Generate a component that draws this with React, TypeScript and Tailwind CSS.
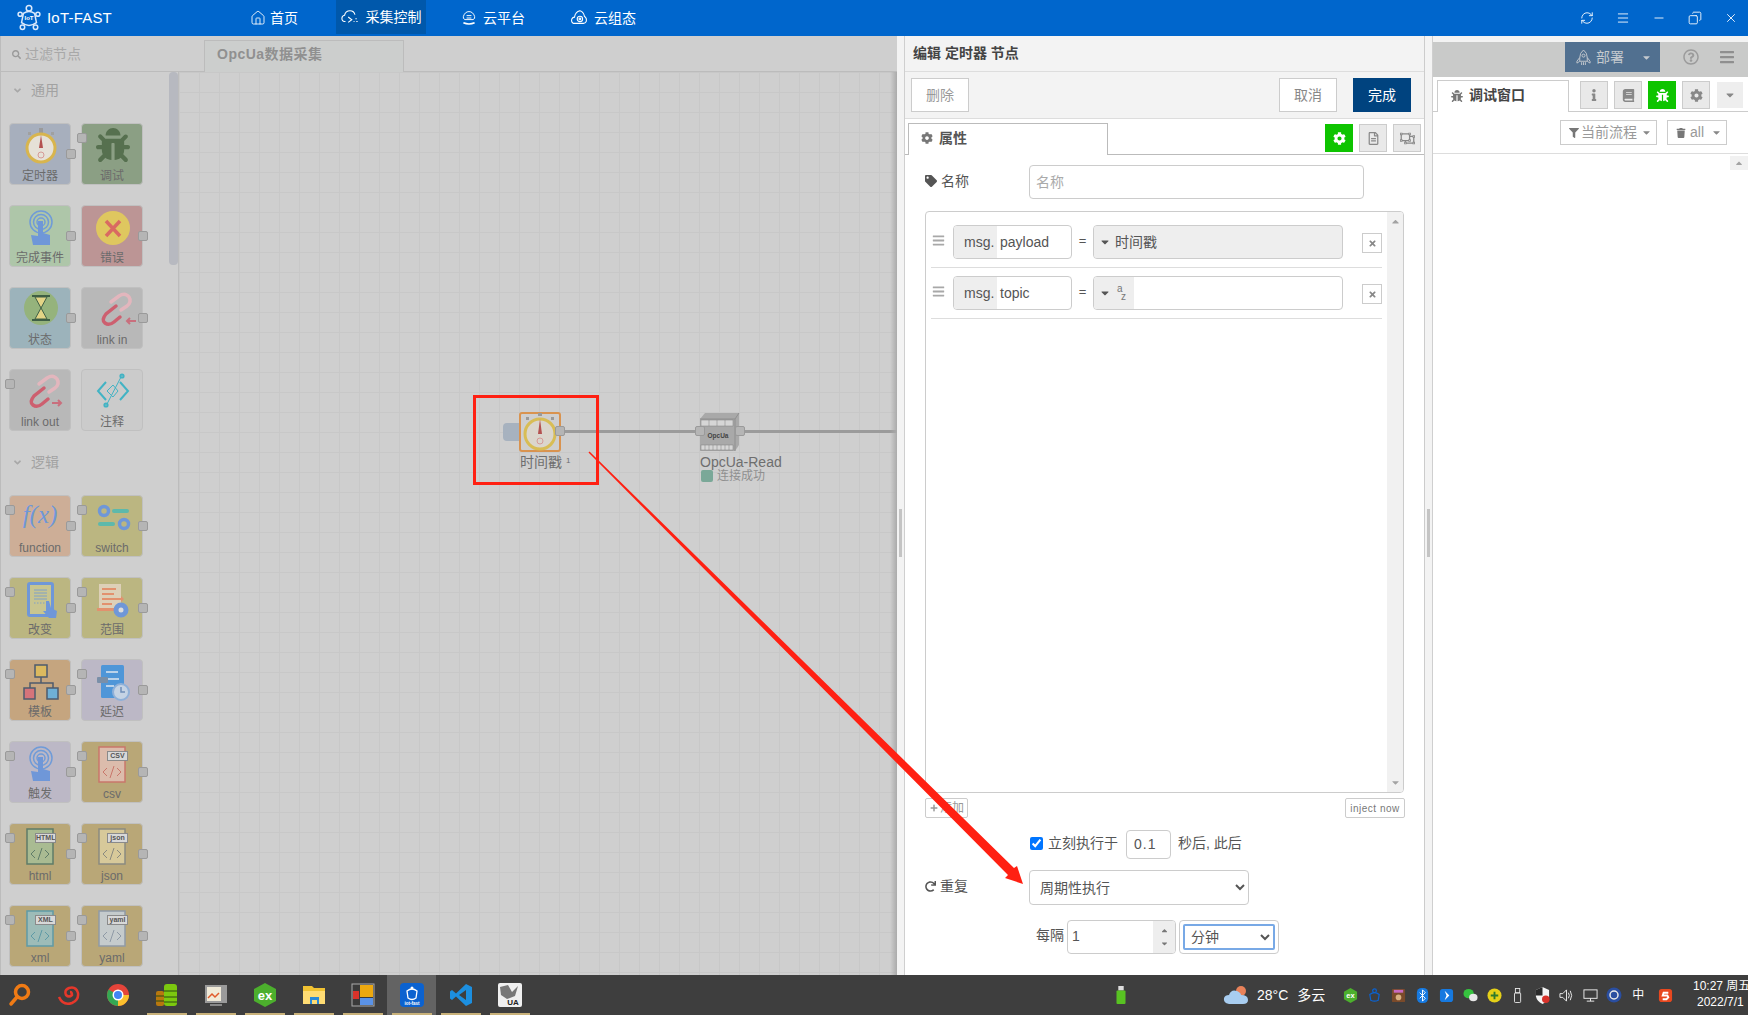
import React from "react";
import {
  FaAngleDown,
  FaBars,
  FaBook,
  FaBug,
  FaCaretDown,
  FaCaretUp,
  FaCog,
  FaFilter,
  FaInfo,
  FaPlus,
  FaRedo,
  FaRegFileAlt,
  FaRegObjectUngroup,
  FaRegQuestionCircle,
  FaSearch,
  FaTag,
  FaTimes,
  FaTrash,
} from "react-icons/fa";
import { Copy, House, Menu, Minus, RefreshCw, X } from "lucide-react";

// ---- palette icons -------------------------------------------------------

const IconBox = ({ children }: { children: React.ReactNode }) => (
  <svg viewBox="0 0 62 44" className="absolute left-0 top-0 w-[62px] h-[44px]">
    {children}
  </svg>
);

const TimerIcon = () => (
  <IconBox>
    <rect x="29" y="4" width="4" height="5" fill="#9a9a9a" />
    <rect x="18" y="8" width="3" height="3" fill="#a0a0a0" />
    <rect x="41" y="8" width="3" height="3" fill="#a0a0a0" />
    <circle cx="31" cy="24" r="14" fill="#e6e1d7" stroke="#d8b54e" strokeWidth="3" />
    <path d="M31 11 L33 24 L29 24 Z" fill="#b4524f" />
    <circle cx="31" cy="31" r="3" fill="none" stroke="#d69a96" strokeWidth="1" />
  </IconBox>
);

const TouchIcon = () => (
  <IconBox>
    <g fill="none" stroke="#6f9bd8" strokeWidth="1.5">
      <circle cx="31" cy="16" r="11" />
      <circle cx="31" cy="16" r="7.5" />
      <circle cx="31" cy="16" r="4" />
    </g>
    <path d="M28 15 h5 v12 l7 2 v10 h-17 l-2 -10 l7 1 Z" fill="#6f97d8" />
  </IconBox>
);

const ErrorIcon = () => (
  <IconBox>
    <circle cx="31" cy="22" r="17" fill="#dfc75f" />
    <path d="M24 15 L38 30 M38 15 L24 30" stroke="#d96a62" strokeWidth="3.5" />
  </IconBox>
);

const StatusIcon = () => (
  <IconBox>
    <circle cx="31" cy="20" r="17" fill="#95b37c" />
    <path d="M22 8 h18 M22 32 h18" stroke="#3f5f45" strokeWidth="2" />
    <path d="M25 9 h12 l-6 11 l6 11 h-12 l6 -11 Z" fill="#e3d486" stroke="#3f5f45" strokeWidth="1" />
  </IconBox>
);

const LinkIcon = ({ dir }: { dir: "in" | "out" }) => (
  <IconBox>
    <path d="M29 14 L37 8 Q43 4 47 9 Q50 14 45 18 L39 22" fill="none" stroke="#e3b6bd" strokeWidth="3.5" strokeLinecap="round" />
    <path d="M34 18 L24 26 Q19 32 23 35 Q27 38 32 34 L38 29" fill="none" stroke="#cd5f6f" strokeWidth="3.5" strokeLinecap="round" />
    {dir === "in" ? (
      <path d="M54 33 h-9 m3 -3 l-3 3 l3 3" fill="none" stroke="#c96f7d" strokeWidth="2" />
    ) : (
      <path d="M42 33 h9 m-3 -3 l3 3 l-3 3" fill="none" stroke="#c96f7d" strokeWidth="2" />
    )}
  </IconBox>
);

const CommentIcon = () => (
  <IconBox>
    <g fill="none" stroke="#42b3c4" strokeWidth="2">
      <path d="M24 12 L16 21 L24 30 M38 12 L46 21 L38 30" />
      <path d="M25 21 L31 15 L36 21 L31 27 Z" strokeWidth="1" />
      <path d="M25 34 L39 7" strokeWidth="1" />
      <circle cx="40" cy="6" r="1.6" />
      <circle cx="24" cy="35" r="1.6" />
    </g>
  </IconBox>
);

const SwitchIcon = () => (
  <IconBox>
    <g fill="none" stroke="#6f97d8" strokeWidth="3.5">
      <circle cx="22" cy="15" r="4.5" />
      <circle cx="42" cy="28" r="4.5" />
    </g>
    <rect x="30" y="13" width="17" height="4" rx="2" fill="#5db9ab" />
    <rect x="16" y="26" width="17" height="4" rx="2" fill="#5db9ab" />
  </IconBox>
);

const ChangeIcon = () => (
  <IconBox>
    <rect x="18.5" y="5.5" width="24" height="32" rx="1.5" fill="#c8c590" stroke="#6f97d8" strokeWidth="3" />
    <path d="M24 12 h13 M24 15 h13 M24 18 h13 M24 21 h13" stroke="#7fa0c8" strokeWidth="1" />
    <path d="M24 25 h11" stroke="#7fa0c8" strokeWidth="1" strokeDasharray="1.5 1.5" />
    <path d="M36 23 l3 0 l2 7 l6 3 l-1 7 h-7 l-6 -7 l3 0 Z" fill="#6f97d8" />
  </IconBox>
);

const RangeIcon = () => (
  <IconBox>
    <rect x="17" y="6" width="22" height="26" fill="#ddd0b8" />
    <path d="M20 11 h14 M20 16 h12 M20 21 h14 M20 26 h10" stroke="#e2916e" strokeWidth="2" />
    <path d="M31 20 h8 l0 -2 l3 3 l-3 3 l0 -2 h-8 Z" fill="#e2916e" />
    <rect x="15" y="30" width="18" height="3" fill="#e2916e" />
    <circle cx="39" cy="32" r="5" fill="#ddd" stroke="#6f97d8" strokeWidth="5" />
  </IconBox>
);

const TemplateIcon = () => (
  <IconBox>
    <rect x="25" y="5" width="12" height="12" fill="#dbb95f" stroke="#4e5b6e" strokeWidth="1.5" />
    <path d="M31 17 v6 M20 28 v-5 h23 v5" fill="none" stroke="#4e5b6e" strokeWidth="1.5" />
    <rect x="14" y="28" width="11" height="11" fill="#d5747a" stroke="#4e5b6e" strokeWidth="1.5" />
    <rect x="37" y="28" width="11" height="11" fill="#6fb0d6" stroke="#4e5b6e" strokeWidth="1.5" />
  </IconBox>
);

const DelayIcon = () => (
  <IconBox>
    <rect x="19" y="5" width="23" height="33" rx="1.5" fill="#4f96d8" />
    <path d="M24 12 h12 M24 19 h13 M24 26 h8" stroke="#dfe6ee" strokeWidth="1.5" />
    <rect x="15" y="17" width="11" height="6" rx="1" fill="#7a8fa8" />
    <circle cx="39" cy="32" r="8" fill="#c5d3e4" stroke="#8fb0d8" strokeWidth="2" />
    <path d="M39 27 v5 h4" fill="none" stroke="#6f8fb8" strokeWidth="1.5" />
  </IconBox>
);

const FileIcon = ({ tag, stroke, fill }: { tag: string; stroke: string; fill: string }) => (
  <>
    <svg viewBox="0 0 62 44" className="absolute left-0 top-0 w-[62px] h-[44px]">
      <rect x="17" y="5" width="26" height="35" fill={fill} stroke={stroke} strokeWidth="1.5" />
      <path d="M25 26 l-4 4 l4 4 M35 26 l4 4 l-4 4 M32 24 l-4 12" fill="none" stroke={stroke} strokeWidth="1" />
    </svg>
    <span className="absolute left-[25px] top-[9px] h-[10px] w-[21px] bg-[#d8d8d8] border border-[#8a8a8a] text-[7px] leading-[8px] font-bold text-center text-[#555] overflow-hidden">
      {tag}
    </span>
  </>
);

// ---- palette ------------------------------------------------------------

type PaletteNode = {
  label: string;
  bg: string;
  icon: React.ReactNode;
  left?: boolean;
  right?: boolean;
};

const generalNodes: PaletteNode[] = [
  { label: "定时器", bg: "bg-[#a7afbd]", icon: <TimerIcon />, right: true },
  {
    label: "调试",
    bg: "bg-[#8b9f84]",
    icon: <FaBug className="absolute left-[14px] top-[4px] text-[#56704f]" size={34} />,
    left: true,
  },
  { label: "完成事件", bg: "bg-[#aec6a9]", icon: <TouchIcon />, right: true },
  { label: "错误", bg: "bg-[#bc9595]", icon: <ErrorIcon />, right: true },
  { label: "状态", bg: "bg-[#9cb3bb]", icon: <StatusIcon />, right: true },
  { label: "link in", bg: "bg-[#b8b8b8]", icon: <LinkIcon dir="in" />, right: true },
  { label: "link out", bg: "bg-[#b8b8b8]", icon: <LinkIcon dir="out" />, left: true },
  { label: "注释", bg: "bg-[#cbcbcb]", icon: <CommentIcon /> },
];

const logicNodes: PaletteNode[] = [
  {
    label: "function",
    bg: "bg-[#cdae97]",
    icon: (
      <span className="absolute inset-x-0 top-[3px] text-center font-['Liberation_Serif',serif] italic text-[25px] leading-[32px] text-[#6f97d8]">
        f(x)
      </span>
    ),
    left: true,
    right: true,
  },
  { label: "switch", bg: "bg-[#bbb681]", icon: <SwitchIcon />, left: true, right: true },
  { label: "改变", bg: "bg-[#bbb681]", icon: <ChangeIcon />, left: true, right: true },
  { label: "范围", bg: "bg-[#bbb681]", icon: <RangeIcon />, left: true, right: true },
  { label: "模板", bg: "bg-[#c5a57f]", icon: <TemplateIcon />, left: true, right: true },
  { label: "延迟", bg: "bg-[#bcb8c6]", icon: <DelayIcon />, left: true, right: true },
  { label: "触发", bg: "bg-[#bcb8c6]", icon: <TouchIcon />, left: true, right: true },
  {
    label: "csv",
    bg: "bg-[#b9a777]",
    icon: <FileIcon tag="CSV" stroke="#c9776b" fill="#dcbcac" />,
    left: true,
    right: true,
  },
  {
    label: "html",
    bg: "bg-[#b9a777]",
    icon: <FileIcon tag="HTML" stroke="#5f7c68" fill="#a9bb92" />,
    left: true,
    right: true,
  },
  {
    label: "json",
    bg: "bg-[#b9a777]",
    icon: <FileIcon tag="json" stroke="#8a8a80" fill="#d7c99a" />,
    left: true,
    right: true,
  },
  {
    label: "xml",
    bg: "bg-[#b9a777]",
    icon: <FileIcon tag="XML" stroke="#5f9aa6" fill="#9dbcb8" />,
    left: true,
    right: true,
  },
  {
    label: "yaml",
    bg: "bg-[#b9a777]",
    icon: <FileIcon tag="yaml" stroke="#8f9aa6" fill="#c5cbcc" />,
    left: true,
    right: true,
  },
];

const Port = ({ className }: { className: string }) => (
  <div className={`absolute w-[10px] h-[10px] rounded-[2px] bg-[#b5b5b5] border border-[#9a9a9a] ${className}`} />
);

const NodeCard = ({ node }: { node: PaletteNode }) => (
  <div className={`relative w-[62px] h-[62px] rounded-[4px] border border-[#c0c0c0] ${node.bg}`}>
    {node.icon}
    <div className="absolute inset-x-[-6px] bottom-[-1px] text-center text-[12px] leading-[18px] text-[#6b6b6b]">
      {node.label}
    </div>
    {node.left && <Port className="left-[-5px] top-[9px]" />}
    {node.right && <Port className="right-[-6px] top-[25px]" />}
  </div>
);

const Section = ({ title, nodes }: { title: string; nodes: PaletteNode[] }) => (
  <div>
    <div className="flex items-center h-[37px] pl-[11px] gap-[8px] text-[14px] text-[#a2a2a2]">
      <FaAngleDown size={11} className="text-[#a8a8a8]" />
      <span>{title}</span>
    </div>
    <div className="grid grid-cols-[62px_62px] gap-x-[10px] gap-y-[20px] pl-[8px] pt-[14px]">
      {nodes.map((n) => (
        <NodeCard key={n.label} node={n} />
      ))}
    </div>
  </div>
);

// ---- header -------------------------------------------------------------

const IotLogo = () => (
  <svg viewBox="0 0 26 30" className="w-[26px] h-[28px]" fill="none" stroke="#dbe9fb" strokeWidth="1.6">
    <circle cx="13" cy="4.5" r="3" />
    <path d="M7 10 Q13 6 19 10 L21 20 Q13 26 5 20 Z" />
    <circle cx="3.5" cy="11" r="2.2" />
    <circle cx="22.5" cy="11" r="2.2" />
    <circle cx="6" cy="25" r="2.4" />
    <circle cx="20" cy="25" r="2.4" />
    <text x="13" y="17" textAnchor="middle" fontSize="6.5" fontWeight="700" fill="#fff" stroke="none">
      IoT
    </text>
  </svg>
);

const CloudNav = ({ kind }: { kind: "gear" | "user" | "ring" }) => (
  <svg viewBox="0 0 20 20" className="w-[18px] h-[18px]" fill="none" stroke="#fff" strokeWidth="1.2">
    {kind === "gear" && (
      <>
        <path d="M5 15 H4 Q1 15 1 11.5 Q1 8.5 4 8 Q5 3 10 3 Q14.5 3 15.5 7.5" />
        <path d="M8 10 l4 3 l-4 3" />
        <path d="M14 15 h1 M16 12 h2 M17 15 h2" strokeDasharray="1.5 1" />
      </>
    )}
    {kind === "user" && (
      <>
        <path d="M5 12 Q2 11 3 8 Q5 2 10 2 Q15 2 17 8 Q18 11 15 12 Z" />
        <path d="M7 7 h6 M7 10 h6" />
        <path d="M3 16 q7 3 14 0" strokeWidth="2" />
      </>
    )}
    {kind === "ring" && (
      <>
        <path d="M4 16 Q1 15 2 11 Q3 9 5 9 Q6 3 11 2 Q15 3 16 8 Q19 10 18 14 Q17 16 15 16 Z" />
        <circle cx="11" cy="11" r="3" />
        <circle cx="11" cy="11" r="1" />
      </>
    )}
  </svg>
);

const Header = () => (
  <div className="h-[36px] shrink-0 bg-[#0066cc] flex items-stretch text-white">
    <div className="flex items-center w-[250px] pl-[16px] gap-[5px]">
      <IotLogo />
      <span className="text-[15px] tracking-[0.2px]">IoT-FAST</span>
    </div>
    <div className="flex items-center w-[86px] gap-[4px] text-[14px]">
      <House size={16} strokeWidth={1.3} />
      <span>首页</span>
    </div>
    <div className="flex items-center justify-center w-[90px] h-[34px] gap-[7px] text-[14px] bg-[#0058ab]">
      <CloudNav kind="gear" />
      <span>采集控制</span>
    </div>
    <div className="flex items-center w-[99px] pl-[35px] gap-[6px] text-[14px]">
      <CloudNav kind="user" />
      <span className="whitespace-nowrap">云平台</span>
    </div>
    <div className="flex items-center pl-[45px] gap-[6px] text-[14px]">
      <CloudNav kind="ring" />
      <span className="whitespace-nowrap">云组态</span>
    </div>
    <div className="ml-auto flex items-center pr-[10px] gap-[22px]">
      <RefreshCw size={14} strokeWidth={1.5} />
      <Menu size={14} strokeWidth={1.5} />
      <Minus size={14} strokeWidth={1.5} />
      <Copy size={14} strokeWidth={1.5} className="-scale-x-100" />
      <X size={14} strokeWidth={1.5} />
    </div>
  </div>
);

// ---- workspace ----------------------------------------------------------

const Sidebar = () => (
  <div className="w-[179px] shrink-0 relative border-l border-r border-[#bcbcbc] overflow-hidden">
    <Section title="通用" nodes={generalNodes} />
    <div className="pt-[13px]">
      <Section title="逻辑" nodes={logicNodes} />
    </div>
    <div className="absolute right-0 top-0 w-[9px] h-[193px] rounded-[4px] bg-[#b7b9c0]" />
  </div>
);

const Canvas = () => (
  <div className="relative flex-1 overflow-hidden bg-[#cfcfcf] bg-[linear-gradient(#c8c8c8_1px,transparent_1px),linear-gradient(90deg,#c8c8c8_1px,transparent_1px)] bg-[size:20px_20px]">
    {/* wires */}
    <div className="absolute left-[385px] top-[358px] w-[140px] h-[3px] bg-[#9b9b9b]" />
    <div className="absolute left-[565px] top-[358px] w-[160px] h-[3px] bg-[#9b9b9b]" />

    {/* timer node */}
    <div className="absolute left-[324px] top-[351px] w-[16px] h-[18px] rounded-l-[4px] bg-[#a7b2bf]" />
    <div className="absolute left-[340px] top-[340px] w-[42px] h-[40px] rounded-[3px] border-2 border-[#d9934f] bg-[#cfcfcf]">
      <svg viewBox="0 0 42 40" className="absolute left-[-2px] top-[-2px] w-[42px] h-[40px]">
        <rect x="19" y="1" width="4" height="3" fill="#9a9a9a" />
        <rect x="7" y="5" width="3" height="3" fill="#9a9a9a" />
        <rect x="32" y="5" width="3" height="3" fill="#9a9a9a" />
        <circle cx="21" cy="22" r="15" fill="#dbd6cc" stroke="#d8bd55" strokeWidth="3" />
        <path d="M21 7 L23 22 L19 22 Z" fill="#b4524f" />
        <circle cx="21" cy="29" r="3" fill="none" stroke="#d69a96" strokeWidth="1" />
      </svg>
    </div>
    <Port className="left-[376px] top-[354px]" />
    <div className="absolute left-[341px] top-[381px] whitespace-nowrap text-[14px] leading-[18px] text-[#6e6e6e]">
      时间戳
      <sup className="text-[8px] ml-[4px]">1</sup>
    </div>

    {/* OpcUa node */}
    <svg viewBox="0 0 40 38" className="absolute left-[521px] top-[341px] w-[40px] h-[38px]">
      <path d="M0 6 L5 0 H39 V32 L35 38 H0 Z" fill="#a9a9a9" />
      <path d="M35 38 V6 H0 M35 6 L39 0" fill="none" stroke="#8f8f8f" />
      <rect x="1" y="7" width="32" height="6" fill="#d6d6d6" stroke="#7f7f7f" strokeWidth="0.5" />
      <path d="M9 7 v6 M17 7 v6 M25 7 v6" stroke="#7f7f7f" strokeWidth="0.5" />
      <rect x="1" y="32" width="32" height="5" fill="#d6d6d6" stroke="#7f7f7f" strokeWidth="0.5" />
      <path d="M5 32 v5 M9 32 v5 M13 32 v5 M17 32 v5 M21 32 v5 M25 32 v5 M29 32 v5" stroke="#7f7f7f" strokeWidth="0.5" />
      <text x="18" y="25" textAnchor="middle" fontSize="6.5" fontWeight="700" fill="#444">
        OpcUa
      </text>
    </svg>
    <Port className="left-[516px] top-[354px]" />
    <Port className="left-[556px] top-[354px]" />
    <div className="absolute left-[521px] top-[381px] whitespace-nowrap text-[14px] leading-[18px] text-[#6e6e6e]">
      OpcUa-Read
    </div>
    <div className="absolute left-[522px] top-[397px] flex items-center gap-[4px]">
      <div className="w-[12px] h-[12px] rounded-[2px] bg-[#7aa898]" />
      <span className="text-[12px] leading-[14px] text-[#8f8f8f]">连接成功</span>
    </div>

    {/* panel shadow */}
    <div className="absolute right-0 inset-y-0 w-[7px] bg-gradient-to-r from-transparent to-[#aaaaaa]" />
  </div>
);

const Workspace = () => (
  <div className="w-[897px] shrink-0 flex flex-col bg-[#cfcfcf]">
    <div className="h-[36px] shrink-0 flex items-end border-b border-[#bcbcbc] border-l">
      <div className="w-[203px] h-full flex items-center pl-[11px] gap-[4px] pt-[2px] text-[14px] text-[#a8a8a8]">
        <FaSearch size={9} className="text-[#9a9a9a]" />
        <span>过滤节点</span>
      </div>
      <div className="w-[200px] h-[32px] mb-[-1px] border border-b-0 border-[#bcbcbc] bg-[#cccecd] pl-[12px] pb-[4px] flex items-center text-[14px] font-bold text-[#909090] tracking-[0.5px]">
        OpcUa数据采集
      </div>
    </div>
    <div className="flex-1 flex min-h-0">
      <Sidebar />
      <Canvas />
    </div>
  </div>
);

const Handle = () => (
  <div className="w-[8px] shrink-0 bg-[#f3f3f3] border-r border-[#cfcfcf] flex items-center justify-center pt-[54px]">
    <div className="w-[3px] h-[48px] bg-[#c4c4c4]" />
  </div>
);

const IconButton = ({ children, active }: { children: React.ReactNode; active?: boolean }) => (
  <div
    className={`w-[28px] h-[28px] flex items-center justify-center border ${
      active ? "bg-[#0ec400] border-[#0ec400] text-white" : "bg-[#e9e9e9] border-[#cccccc] text-[#888888]"
    }`}
  >
    {children}
  </div>
);

const PropRow = ({ name, typed }: { name: string; typed: boolean }) => (
  <div className="h-[51px] shrink-0 mx-[5px] border-b border-[#dddddd] flex items-start pt-[8px]">
    <FaBars size={13} className="ml-[1px] mt-[9px] text-[#a8a8a8]" />
    <div className="ml-[8px] w-[119px] h-[34px] rounded-[4px] border border-[#cccccc] flex overflow-hidden text-[14px] text-[#555555]">
      <div className="w-[43px] bg-[#eeeeee] flex items-center pl-[10px]">msg.</div>
      <div className="flex-1 flex items-center pl-[3px]">{name}</div>
    </div>
    <div className="w-[21px] text-center text-[13px] leading-[32px] text-[#555555]">=</div>
    <div
      className={`w-[250px] h-[34px] rounded-[4px] border border-[#cccccc] flex overflow-hidden text-[14px] text-[#555555] ${
        typed ? "bg-[#eeeeee]" : "bg-white"
      }`}
    >
      <div
        className={`bg-[#eeeeee] flex items-center pl-[5px] gap-[6px] shrink-0 ${typed ? "w-[21px]" : "w-[40px]"}`}
      >
        <FaCaretDown size={12} className="text-[#555555]" />
        {!typed && (
          <span className="text-[10px] leading-[8px] text-[#777777]">
            a<br />
            <span className="ml-[4px]">z</span>
          </span>
        )}
      </div>
      {typed && <span className="flex items-center whitespace-nowrap">时间戳</span>}
    </div>
    <div className="ml-[19px] mt-[8px] w-[20px] h-[20px] border border-[#cccccc] flex items-center justify-center">
      <FaTimes size={9} className="text-[#888888]" />
    </div>
  </div>
);

const EditTray = () => (
  <div className="w-[520px] shrink-0 flex flex-col bg-white border-r border-[#cccccc]">
    <div className="h-[36px] shrink-0 bg-[#f3f3f3] border-b border-[#dddddd] flex items-center pl-[8px] text-[14px] font-bold text-[#444444]">
      编辑 定时器 节点
    </div>
    <div className="h-[47px] shrink-0 bg-[#f3f3f3] border-b border-[#dddddd] flex items-center pl-[6px] pr-[13px] text-[14px]">
      <button className="w-[58px] h-[34px] bg-white border border-[#cccccc] text-[#999999]">删除</button>
      <button className="ml-auto w-[58px] h-[34px] bg-white border border-[#cccccc] text-[#888888]">取消</button>
      <button className="ml-[16px] w-[58px] h-[34px] bg-[#00437f] text-white">完成</button>
    </div>
    <div className="h-[36px] shrink-0 border-b border-[#bbbbbb] flex items-end pl-[3px] pr-[3px]">
      <div className="w-[200px] h-[32px] mb-[-1px] bg-white border border-b-0 border-[#bbbbbb] flex items-center pl-[12px] pb-[3px] gap-[6px] text-[14px] font-bold text-[#555555]">
        <FaCog size={12} className="text-[#777777]" />
        属性
      </div>
      <div className="ml-auto flex gap-[6px] mb-[2px]">
        <IconButton active>
          <FaCog size={13} />
        </IconButton>
        <IconButton>
          <FaRegFileAlt size={13} />
        </IconButton>
        <IconButton>
          <FaRegObjectUngroup size={15} />
        </IconButton>
      </div>
    </div>

    <div className="flex-1 min-h-0 pl-[20px] pr-[21px] text-[#555555]">
      <div className="flex items-center mt-[10px] h-[34px] text-[14px]">
        <div className="w-[104px] flex items-center gap-[4px] pb-[2px]">
          <FaTag size={12} />
          <span>名称</span>
        </div>
        <input
          readOnly
          placeholder="名称"
          className="w-[335px] h-[34px] rounded-[4px] border border-[#cccccc] pl-[6px] placeholder:text-[#aaaaaa]"
        />
      </div>

      <div className="mt-[12px] h-[582px] w-[479px] rounded-[4px] border border-[#cccccc] flex overflow-hidden">
        <div className="flex-1 flex flex-col pt-[5px]">
          <PropRow name="payload" typed />
          <PropRow name="topic" typed={false} />
        </div>
        <div className="w-[17px] bg-[#f1f1f1] flex flex-col justify-between items-center py-[4px]">
          <FaCaretUp size={11} className="text-[#a3a3a3]" />
          <FaCaretDown size={11} className="text-[#a3a3a3]" />
        </div>
      </div>

      <div className="mt-[5px] w-[480px] flex justify-between">
        <div className="w-[43px] h-[20px] rounded-[2px] border border-[#cccccc] flex items-center pl-[4px] gap-[2px] text-[12px] text-[#999999]">
          <FaPlus size={8} />
          添加
        </div>
        <div className="w-[60px] h-[20px] rounded-[2px] border border-[#cccccc] flex items-center justify-center text-[10px] tracking-[0.5px] text-[#777777]">
          inject now
        </div>
      </div>

      <div className="mt-[11px] pl-[105px] flex items-center h-[30px] text-[14px]">
        <input type="checkbox" readOnly checked className="w-[13px] h-[13px] mb-[2px] accent-[#0075ff]" />
        <span className="ml-[5px] mb-[2px]">立刻执行于</span>
        <input
          readOnly
          value="0.1"
          className="ml-[8px] w-[45px] h-[29px] rounded-[4px] border border-[#cccccc] pl-[7px] tracking-[1px]"
        />
        <span className="ml-[7px] mb-[2px]">秒后, 此后</span>
      </div>

      <div className="mt-[11px] flex items-center h-[35px] text-[14px]">
        <div className="w-[104px] flex items-center gap-[4px] pb-[2px]">
          <FaRedo size={11} />
          <span>重复</span>
        </div>
        <select
          defaultValue="interval"
          className="w-[220px] h-[35px] rounded-[4px] border border-[#cccccc] bg-white pl-[6px]"
        >
          <option value="interval">周期性执行</option>
        </select>
      </div>

      <div className="mt-[14px] pl-[111px] flex items-center h-[35px] text-[14px]">
        <span className="w-[31px] mb-[2px]">每隔</span>
        <div className="w-[109px] h-[34px] rounded-[4px] border border-[#cccccc] flex overflow-hidden">
          <input readOnly value="1" className="w-[85px] pl-[4px]" />
          <div className="flex-1 bg-[#eeeeee] flex flex-col items-center justify-center gap-[4px] text-[#777777]">
            <FaCaretUp size={9} />
            <FaCaretDown size={9} />
          </div>
        </div>
        <div className="ml-[3px] w-[100px] h-[34px] rounded-[4px] border border-[#cccccc] p-[3px]">
          <select
            defaultValue="m"
            className="w-full h-full rounded-[2px] border-2 border-[#78a9e6] bg-white pl-[2px] outline-none"
          >
            <option value="m">分钟</option>
          </select>
        </div>
      </div>
    </div>
  </div>
);

const DebugPanel = () => (
  <div className="flex-1 min-w-0 flex flex-col bg-white">
    <div className="h-[6px] shrink-0 bg-[#f3f3f3]" />
    <div className="h-[35px] shrink-0 bg-[#c9cac9] flex items-start text-[#aaaaaa]">
      <div className="ml-[132px] w-[95px] h-[30px] bg-[#517090] flex items-center pl-[11px] text-[14px] text-[#c4c9ce]">
        <svg viewBox="0 0 16 18" className="w-[15px] h-[17px]" fill="none" stroke="#c4c9ce" strokeWidth="1">
          <path d="M8 1 Q4 4 4 9 V13 H12 V9 Q12 4 8 1 Z" />
          <circle cx="8" cy="7" r="1.6" />
          <path d="M4 9 L1 13 V15 L4 13 M12 9 L15 13 V15 L12 13 M6 14 V17 M8 14 V17 M10 14 V17" />
        </svg>
        <span className="ml-[5px]">部署</span>
        <FaCaretDown size={11} className="ml-auto mr-[8px]" />
      </div>
      <FaRegQuestionCircle size={16} className="ml-[23px] mt-[7px] text-[#9b9b9b]" />
      <FaBars size={16} className="ml-[20px] mt-[7px] text-[#8f8f8f]" />
    </div>
    <div className="h-[35px] shrink-0 border-b border-[#cccccc] flex items-end">
      <div className="ml-[4px] w-[132px] h-[32px] mb-[-1px] bg-white border border-b-0 border-[#cccccc] flex items-center pl-[13px] pb-[2px] gap-[6px] text-[14px] font-bold text-[#444444]">
        <FaBug size={12} className="text-[#777777]" />
        调试窗口
      </div>
      <div className="ml-[11px] flex gap-[6px] mb-[2px]">
        <IconButton>
          <FaInfo size={12} />
        </IconButton>
        <IconButton>
          <FaBook size={13} />
        </IconButton>
        <IconButton active>
          <FaBug size={13} />
        </IconButton>
        <IconButton>
          <FaCog size={13} />
        </IconButton>
      </div>
      <div className="ml-[7px] mb-[3px] w-[26px] h-[26px] bg-[#eeeeee] flex items-center justify-center text-[#888888]">
        <FaCaretDown size={12} />
      </div>
    </div>
    <div className="h-[42px] shrink-0 border-b border-[#dddddd] flex items-center justify-end pr-[21px] gap-[10px] text-[14px] text-[#999999]">
      <div className="w-[97px] h-[25px] border border-[#cccccc] flex items-center pl-[8px] gap-[2px]">
        <FaFilter size={10} className="text-[#777777]" />
        <span className="whitespace-nowrap">当前流程</span>
        <FaCaretDown size={11} className="ml-auto mr-[4px] text-[#888888]" />
      </div>
      <div className="w-[60px] h-[25px] border border-[#cccccc] flex items-center pl-[8px] gap-[4px]">
        <FaTrash size={10} className="text-[#777777]" />
        <span>all</span>
        <FaCaretDown size={11} className="ml-auto mr-[4px] text-[#888888]" />
      </div>
    </div>
    <div className="flex-1 flex justify-end">
      <div className="w-[18px] h-[14px] mt-[2px] bg-[#f1f1f1] flex items-center justify-center">
        <FaCaretUp size={10} className="text-[#a3a3a3]" />
      </div>
    </div>
  </div>
);

// ---- taskbar ------------------------------------------------------------

const taskIcons: React.ReactNode[] = [
  <svg viewBox="0 0 24 24" className="w-[24px] h-[24px]" key="search" fill="none" stroke="#f07b15" strokeWidth="3.5">
    <circle cx="14" cy="9" r="6.5" />
    <path d="M9 14 L3 21" strokeLinecap="round" />
  </svg>,
  <svg viewBox="0 0 24 24" className="w-[24px] h-[24px]" key="snail" fill="none" stroke="#e6372a" strokeWidth="2.5">
    <path d="M2 14 Q6 23 15 20 Q22 17 21 10 Q19 3 12 5 Q7 7 9 12 Q12 15 15 12 Q15 9 13 9" />
  </svg>,
  <svg viewBox="0 0 24 24" className="w-[24px] h-[24px]" key="chrome">
    <circle cx="12" cy="12" r="11" fill="#e5443a" />
    <path d="M12 12 L2.5 6.5 A11 11 0 0 0 12 23 Z" fill="#34a853" />
    <path d="M12 12 L23 12 A11 11 0 0 1 12 23 Z" fill="#fbc02d" />
    <circle cx="12" cy="12" r="5.5" fill="#fff" />
    <circle cx="12" cy="12" r="4" fill="#4285f4" />
  </svg>,
  <svg viewBox="0 0 24 24" className="w-[24px] h-[24px]" key="db">
    <rect x="1" y="8" width="8" height="15" rx="2" fill="#b8780e" />
    <rect x="9" y="1" width="13" height="22" rx="3" fill="#7cc80f" />
    <path d="M9 8 h13 M9 14 h13 M9 19 h13 M1 13 h8 M1 18 h8" stroke="#2c4a10" strokeWidth="1" />
  </svg>,
  <svg viewBox="0 0 24 24" className="w-[24px] h-[24px]" key="monitor">
    <rect x="1" y="2" width="22" height="18" fill="#9a9a9a" />
    <rect x="3" y="4" width="14" height="14" fill="#f0ead8" />
    <path d="M4 15 L8 11 L11 14 L15 10" fill="none" stroke="#e05a2a" strokeWidth="1.5" />
    <path d="M6 22 h12" stroke="#888" strokeWidth="2" />
  </svg>,
  <svg viewBox="0 0 24 24" className="w-[24px] h-[24px]" key="ex">
    <path d="M12 0 L23 6 V18 L12 24 L1 18 V6 Z" fill="#4caf2d" />
    <text x="12" y="17" textAnchor="middle" fontSize="13" fontWeight="700" fill="#fff">
      ex
    </text>
  </svg>,
  <svg viewBox="0 0 24 24" className="w-[24px] h-[24px]" key="folder">
    <path d="M1 3 H10 L12 5 H23 V21 H1 Z" fill="#f1c232" />
    <path d="M1 8 H23 V21 H1 Z" fill="#ffdc73" />
    <rect x="8" y="14" width="9" height="7" fill="#2a8ad8" />
    <rect x="10" y="17" width="5" height="4" fill="#ffdc73" />
  </svg>,
  <svg viewBox="0 0 24 24" className="w-[24px] h-[24px]" key="panels">
    <rect x="1" y="1" width="22" height="22" fill="#3a3a3a" stroke="#aaa" strokeWidth="1" />
    <rect x="9" y="2" width="13" height="12" fill="#eca80f" />
    <rect x="9" y="15" width="13" height="7" fill="#5a92e6" />
    <rect x="2" y="8" width="6" height="8" fill="#d8322a" />
  </svg>,
  <svg viewBox="0 0 24 24" className="w-[24px] h-[24px]" key="iot">
    <rect x="0" y="0" width="24" height="24" rx="4" fill="#0b62d0" />
    <path d="M7 8 Q12 4 17 8 L16 15 Q12 18 8 15 Z" fill="none" stroke="#fff" strokeWidth="1.3" />
    <circle cx="12" cy="5" r="1.5" fill="#fff" />
    <text x="12" y="22" textAnchor="middle" fontSize="4.5" fontWeight="700" fill="#fff">
      iot-fast
    </text>
  </svg>,
  <svg viewBox="0 0 24 24" className="w-[24px] h-[24px]" key="vscode">
    <path d="M17 1 L23 4 V20 L17 23 L7 13.5 L3 17 L1 15.5 V8.5 L3 7 L7 10.5 Z M17 7 L10 12 L17 17 Z" fill="#1c8fe0" fillRule="evenodd" />
  </svg>,
  <svg viewBox="0 0 24 24" className="w-[24px] h-[24px]" key="ua">
    <rect x="0" y="0" width="24" height="24" rx="2" fill="#efefef" />
    <path d="M2 4 L10 2 L14 9 L20 3 L17 13 L9 16 L3 12 Z" fill="#777" />
    <text x="15" y="22" textAnchor="middle" fontSize="8" fontWeight="700" fill="#222">
      UA
    </text>
  </svg>,
];

const TrayIcon = ({ children }: { children: React.ReactNode }) => (
  <div className="w-[24px] h-[20px] flex items-center justify-center">{children}</div>
);

const Taskbar = () => (
  <div className="h-[40px] shrink-0 bg-[#3e3e3e] flex items-stretch overflow-hidden text-white">
    <div className="flex ml-[-5px]">
      {taskIcons.map((icon, i) => (
        <div
          key={i}
          className={`relative w-[49px] flex items-center justify-center ${i === 8 ? "bg-[#636363]" : ""}`}
        >
          {icon}
          {i >= 3 && <div className="absolute bottom-0 left-[5px] right-[4px] h-[2px] bg-[#c9b27a]" />}
        </div>
      ))}
    </div>
    <div className="ml-[582px] flex items-center">
      <svg viewBox="0 0 10 20" className="w-[10px] h-[18px]">
        <rect x="2" y="0" width="6" height="5" fill="#dddddd" />
        <rect x="0" y="5" width="10" height="15" rx="1" fill="#58c222" />
      </svg>
    </div>
    <div className="ml-[97px] flex items-center">
      <svg viewBox="0 0 26 20" className="w-[26px] h-[20px]">
        <circle cx="18" cy="6" r="5" fill="#e8825a" />
        <path d="M6 19 Q0 18 1 13 Q2 10 6 10 Q8 4 14 6 Q18 8 18 10 Q25 10 25 15 Q25 19 20 19 Z" fill="#a8cdf0" />
      </svg>
    </div>
    <div className="ml-[8px] flex items-center text-[14px] whitespace-nowrap">28°C</div>
    <div className="ml-[9px] flex items-center text-[14px] whitespace-nowrap">多云</div>
    <div className="ml-[13px] flex items-center">
      <TrayIcon>
        <svg viewBox="0 0 16 16" className="w-[15px] h-[15px]">
          <path d="M8 0 L15 4 V12 L8 16 L1 12 V4 Z" fill="#4caf2d" />
          <text x="8" y="11" textAnchor="middle" fontSize="8" fontWeight="700" fill="#fff">
            ex
          </text>
        </svg>
      </TrayIcon>
      <TrayIcon>
        <svg viewBox="0 0 16 16" className="w-[15px] h-[15px]" fill="none" stroke="#0b62d0" strokeWidth="1.3">
          <circle cx="8" cy="3" r="2" />
          <path d="M3 7 Q8 3 13 7 L12 13 Q8 15 4 13 Z" />
        </svg>
      </TrayIcon>
      <TrayIcon>
        <svg viewBox="0 0 16 16" className="w-[15px] h-[15px]">
          <rect x="1" y="1" width="14" height="14" rx="1" fill="#7a4a2a" />
          <rect x="3" y="2" width="10" height="3" fill="#c86ac0" />
          <circle cx="8" cy="10" r="3" fill="#d8b080" />
        </svg>
      </TrayIcon>
      <TrayIcon>
        <svg viewBox="0 0 16 16" className="w-[15px] h-[15px]">
          <rect x="2" y="0" width="12" height="16" rx="5" fill="#1679e0" />
          <path d="M5 5 L11 11 L8 14 V2 L11 5 L5 11" fill="none" stroke="#fff" strokeWidth="1" />
        </svg>
      </TrayIcon>
      <TrayIcon>
        <svg viewBox="0 0 16 16" className="w-[15px] h-[15px]">
          <rect x="1" y="1" width="14" height="14" rx="3" fill="#1679e0" />
          <path d="M6 3 L11 8 L6 13 L8 8 Z" fill="#fff" />
        </svg>
      </TrayIcon>
      <TrayIcon>
        <svg viewBox="0 0 16 16" className="w-[15px] h-[15px]">
          <ellipse cx="6" cy="6" rx="5.5" ry="5" fill="#36c23f" />
          <ellipse cx="11" cy="10" rx="4.5" ry="4" fill="#e8e8e8" />
        </svg>
      </TrayIcon>
      <TrayIcon>
        <svg viewBox="0 0 16 16" className="w-[15px] h-[15px]">
          <circle cx="8" cy="8" r="7.5" fill="#e5d018" />
          <path d="M8 4 V12 M4 8 H12" stroke="#2c7a2c" strokeWidth="2" />
        </svg>
      </TrayIcon>
      <TrayIcon>
        <svg viewBox="0 0 16 18" className="w-[14px] h-[17px]" fill="none" stroke="#eeeeee" strokeWidth="1">
          <rect x="4" y="6" width="7" height="11" rx="1" />
          <rect x="5" y="1" width="5" height="5" />
        </svg>
      </TrayIcon>
      <TrayIcon>
        <svg viewBox="0 0 16 18" className="w-[15px] h-[17px]">
          <path d="M8 0 L15 3 V10 Q14 15 8 18 Q2 15 1 10 V3 Z" fill="#f4f4f4" />
          <path d="M8 0 V9 H1 V3 Z" fill="#2a2a2a" />
          <circle cx="11.5" cy="13" r="4" fill="#d8322a" />
        </svg>
      </TrayIcon>
      <TrayIcon>
        <svg viewBox="0 0 16 16" className="w-[15px] h-[15px]" fill="none" stroke="#eeeeee" strokeWidth="1">
          <path d="M1 6 H4 L8 2 V14 L4 10 H1 Z" />
          <path d="M10 5 Q12 8 10 11 M12 3 Q15 8 12 13" />
        </svg>
      </TrayIcon>
      <TrayIcon>
        <svg viewBox="0 0 16 16" className="w-[15px] h-[15px]" fill="none" stroke="#eeeeee" strokeWidth="1">
          <rect x="1" y="2" width="14" height="9" />
          <path d="M8 11 V14 M4 14 H12" />
        </svg>
      </TrayIcon>
      <TrayIcon>
        <svg viewBox="0 0 16 16" className="w-[16px] h-[16px]">
          <circle cx="8" cy="8" r="7.5" fill="#2a4ea0" />
          <circle cx="8" cy="8" r="4" fill="none" stroke="#e8e8e8" strokeWidth="1.5" />
        </svg>
      </TrayIcon>
      <span className="w-[24px] text-center text-[12px] mr-[-1px]">中</span>
      <div className="ml-[4px]">
        <TrayIcon>
          <svg viewBox="0 0 16 16" className="w-[15px] h-[15px]">
            <rect x="1" y="1" width="14" height="14" rx="3" fill="#e8481f" />
            <path d="M11 5 H6 L5 8 H10 L11 10 L9 12 H5" fill="none" stroke="#fff" strokeWidth="2" />
          </svg>
        </TrayIcon>
      </div>
    </div>
    <div className="ml-auto w-[55px] shrink-0 text-[12px] leading-[16px] pt-[3px] whitespace-nowrap overflow-hidden">
      <div>10:27 周五</div>
      <div className="pl-[4px]">2022/7/1</div>
    </div>
  </div>
);

// ---- page ---------------------------------------------------------------

export default function App() {
  return (
    <div className="relative w-[1748px] h-[1015px] overflow-hidden flex flex-col font-['Liberation_Sans','Noto_Sans_CJK_SC',sans-serif]">
      <Header />
      <div className="flex-1 min-h-0 flex">
        <Workspace />
        <Handle />
        <EditTray />
        <Handle />
        <DebugPanel />
      </div>
      <Taskbar />

      {/* screenshot annotation drawn on top of the app */}
      <div className="absolute left-[473px] top-[395px] w-[126px] h-[90px] border-[3px] border-[#ff2012]" />
      <svg viewBox="0 0 1748 1015" className="absolute inset-0 w-[1748px] h-[1015px] pointer-events-none">
        <polygon points="588.5,452.5 589.5,451.5 1014,868 1017,866 1023,884 1005,878 1008,875" fill="#ff2012" />
      </svg>
    </div>
  );
}
